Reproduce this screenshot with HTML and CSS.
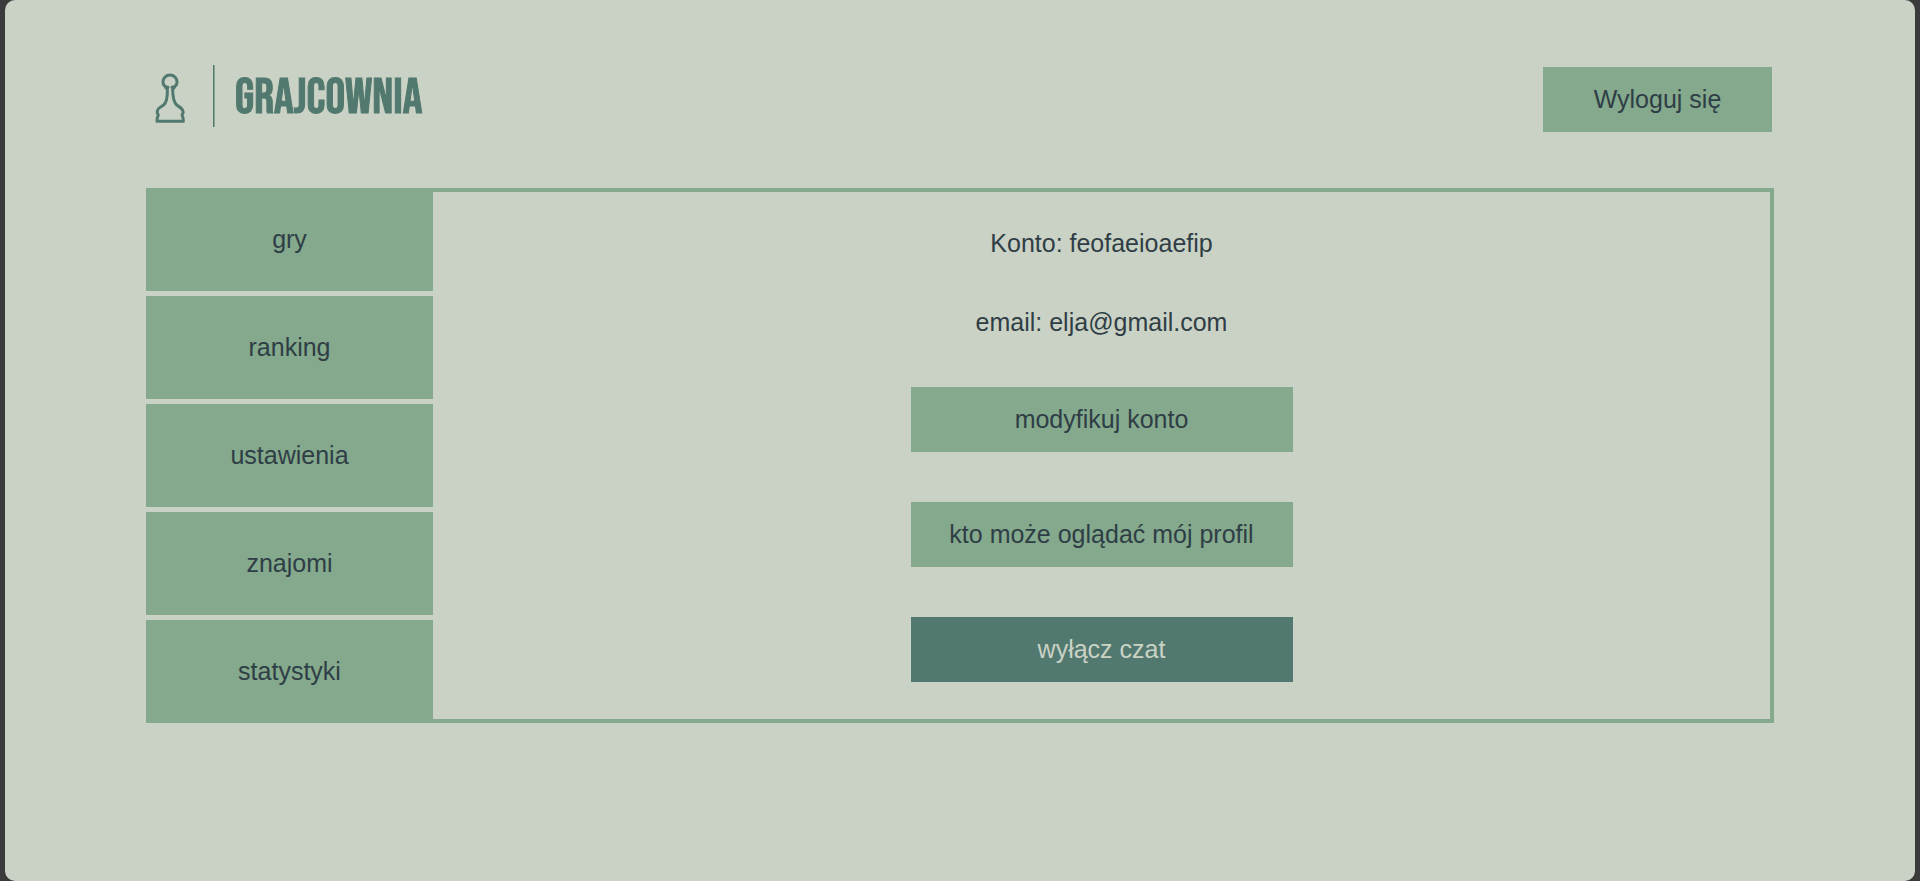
FILE: index.html
```html
<!DOCTYPE html>
<html lang="pl">
<head>
<meta charset="utf-8">
<title>Grajcownia</title>
<link rel="stylesheet" href="styles.css">
</head>
<body>
<div class="page">
  <header class="header">
    <div class="brand">
      <svg class="pawn" viewBox="30 36 93 156" fill="none" stroke="currentColor" stroke-width="9" stroke-linejoin="round" stroke-linecap="round" aria-hidden="true">
        <path d="M69 82 C57 80 54 73 54 66 A21 21 0 0 1 96 66 C96 73 93 80 81 82"/>
        <path d="M62 83 L67 87 C68 112 65 128 55 136 C45 142 37 146 37 154 L37 160 L40 165 L37 173 L36 184 L115 184 L114 173 L111 165 L114 160 L114 154 C113 146 105 142 96 136 C87 128 83 112 83 87 L88 83"/>
      </svg>
      <span class="divider"></span>
      <span class="brand-name">GRAJCOWNIA</span>
    </div>
    <button class="button logout" type="button">Wyloguj się</button>
  </header>
  <main class="panel">
    <nav class="menu">
      <button class="menu-item" type="button">gry</button>
      <button class="menu-item" type="button">ranking</button>
      <button class="menu-item" type="button">ustawienia</button>
      <button class="menu-item" type="button">znajomi</button>
      <button class="menu-item" type="button">statystyki</button>
    </nav>
    <section class="settings">
      <p class="info">Konto: feofaeioaefip</p>
      <p class="info">email: elja@gmail.com</p>
      <button class="button wide" type="button">modyfikuj konto</button>
      <button class="button wide" type="button">kto może oglądać mój profil</button>
      <button class="button wide dark" type="button">wyłącz czat</button>
    </section>
  </main>
</div>
</body>
</html>
```
FILE: styles.css
```css
* {
  box-sizing: border-box;
}

body {
  margin: 0;
  padding: 0 5px;
  background: #3b3b3b;
  color: #2f3e46;
  font: 25px/29px "Liberation Sans", Arial, sans-serif;
}

.page {
  min-height: 100vh;
  padding: 65px 141px;
  background: #cad2c5;
  border-radius: 10px;
}

.header {
  display: flex;
  justify-content: space-between;
  align-items: flex-start;
  padding: 0 2px 0 9px;
  margin-bottom: 56px;
}

.brand {
  display: flex;
  align-items: center;
  color: #52796f;
}

.pawn {
  width: 31px;
  height: 52px;
  margin-top: 4px;
}

.divider {
  width: 2px;
  height: 62px;
  margin: 0 20px 0 27px;
  border-left: 1px solid #52796f;
  border-right: 1px solid #84a98c;
}

.brand-name {
  padding-top: 6px;
  font: 49px/56px "Bebas Neue", "Liberation Sans Narrow", "Liberation Sans", sans-serif;
  -webkit-text-stroke: 1px currentColor;
}

.button,
.menu-item {
  border: 0;
  background: #84a98c;
  color: inherit;
  font: inherit;
  cursor: pointer;
}

.button {
  padding: 18px 20px;
}

.logout {
  width: 229px;
  margin-top: 2px;
}

.panel {
  display: flex;
}

.menu {
  display: flex;
  flex-direction: column;
  gap: 5px;
  width: 287px;
}

.menu-item {
  flex: 1;
  padding: 37px 20px;
}

.settings {
  flex: 1;
  display: flex;
  flex-direction: column;
  align-items: center;
  gap: 50px;
  padding: 37px 20px;
  border: 4px solid #84a98c;
  border-left: 0;
}

.info {
  margin: 0;
}

.wide {
  width: 382px;
}

.dark {
  background: #52796f;
  color: #cad2c5;
}
```
